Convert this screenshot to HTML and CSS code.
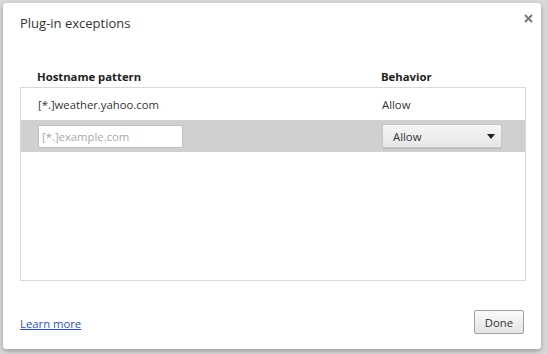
FILE: index.html
```html
<!DOCTYPE html>
<html lang="en">
    <head>
        <meta name="viewport" content="width=device-width, initial-scale=1.0">
        <title>Plug-in exceptions</title>
        <link rel="stylesheet" href="styles.css">
    </head>
    <body>
        <div class="overlay">
            <div class="dialog">
                <div class="dialog-head">
                    <h1 class="title">Plug-in exceptions</h1>
                    <span class="close">
                        <svg width="9" height="9" viewBox="0 0 9 9"><path d="M1 1 L8 8 M8 1 L1 8" stroke="#7a7a7a" stroke-width="2"/></svg>
                    </span>
                </div>
                <div class="columns">
                    <div class="col-host">Hostname pattern</div>
                    <div class="col-behavior">Behavior</div>
                </div>
                <div class="list">
                    <div class="row">
                        <div class="col-host">[*.]weather.yahoo.com</div>
                        <div class="col-behavior">Allow</div>
                    </div>
                    <div class="row selected">
                        <div class="col-host"><input class="pattern" type="text" placeholder="[*.]example.com"></div>
                        <div class="col-behavior">
                            <div class="select">
                                <span>Allow</span>
                                <svg width="8" height="5" viewBox="0 0 8 5"><path d="M0 0 H8 L4 5 Z" fill="#222"/></svg>
                            </div>
                        </div>
                    </div>
                </div>
                <div class="dialog-foot">
                    <a class="learn" href="#">Learn more</a>
                    <button class="done">Done</button>
                </div>
            </div>
        </div>
    </body>
</html>
```

FILE: styles.css
```css
* {
    box-sizing: border-box;
}

body {
    margin: 0;
    padding: 0;
    background-color: #d9d9d9;
    color: #333333;
    font-family: "Open Sans", "Noto Sans", sans-serif;
    font-size: 11.3px;
}

.overlay {
    width: 547px;
    height: 354px;
    padding: 3px 0 0 3px;
}

.dialog {
    width: 538px;
    height: 346px;
    background: #ffffff;
    border-radius: 3px;
    box-shadow: 0 2px 5px rgba(0, 0, 0, 0.3);
    display: flex;
    flex-direction: column;
    padding: 0 15px 0 17px;
}

.dialog-head {
    display: flex;
    justify-content: space-between;
    align-items: flex-start;
    height: 59px;
}

.title {
    margin: 11px 0 0 0;
    font-size: 13px;
    font-weight: normal;
    color: #333333;
}

.close {
    margin: 11px -7px 0 0;
    display: flex;
}

.columns {
    display: flex;
    height: 25px;
    padding-top: 3px;
    align-items: center;
    font-weight: bold;
    color: #222222;
}

.col-host {
    width: 361px;
    padding-left: 17px;
}

.col-behavior {
    flex: 1;
}

.list {
    border: 1px solid #d9d9d9;
    height: 194px;
}

.row {
    display: flex;
    align-items: center;
    height: 32px;
}

.selected {
    background: #d0d0d0;
}

.pattern {
    width: 145px;
    height: 23px;
    border: 1px solid #bfbfbf;
    border-radius: 2px;
    font-family: inherit;
    font-size: 11.3px;
    padding: 0 3px;
    color: #333333;
}

.pattern::placeholder {
    color: #a8a8a8;
}

.select {
    width: 120px;
    height: 24px;
    display: flex;
    align-items: center;
    justify-content: space-between;
    padding: 0 6px 0 10px;
    border: 1px solid #c8c8c8;
    border-radius: 2px;
    background: linear-gradient(#f6f6f6, #e6e6e6);
    box-shadow: 0 1px 1px rgba(0, 0, 0, 0.12);
}

.dialog-foot {
    margin-top: auto;
    margin-bottom: 15px;
    display: flex;
    justify-content: space-between;
    align-items: center;
    height: 24px;
}

.learn {
    color: #1f53d6;
    padding-top: 3px;
}

.done {
    width: 50px;
    height: 24px;
    margin-right: 2px;
    font-family: inherit;
    font-size: 11.3px;
    color: #333333;
    border: 1px solid #a0a0a0;
    border-radius: 2px;
    background: linear-gradient(#fafafa, #e4e4e4);
}
```
